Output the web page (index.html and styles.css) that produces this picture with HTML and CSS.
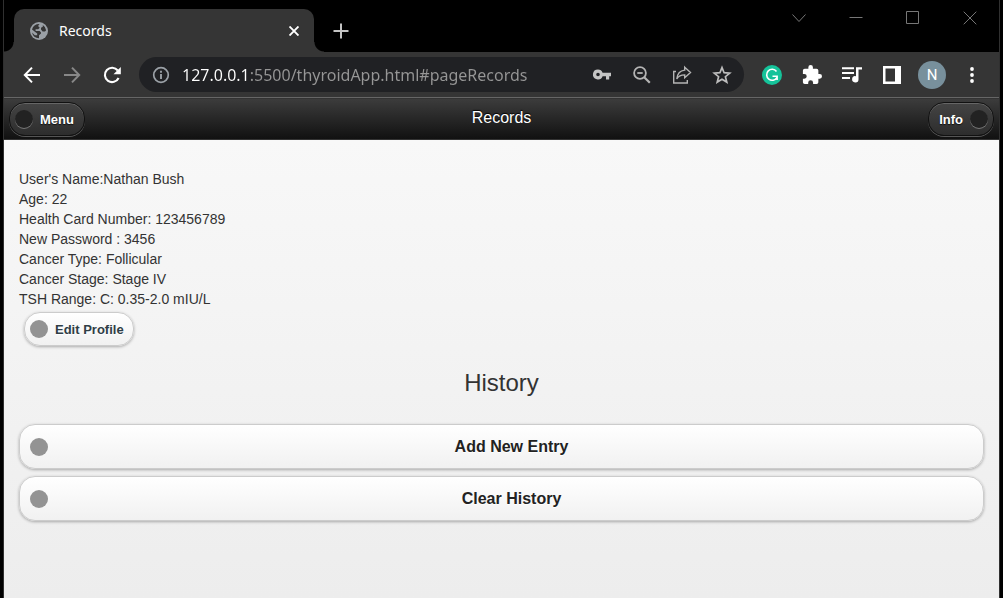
FILE: index.html
```html
<!DOCTYPE html>
<html lang="en">
<head>
<meta charset="utf-8">
<title>Records</title>
<link rel="stylesheet" href="styles.css">
</head>
<body>
<div class="window">
  <div class="tabstrip">
    <div class="tab">
      <svg class="favicon" width="18" height="18" viewBox="0 0 18 18"><circle cx="9" cy="9" r="9" fill="#9aa0a6"/><path d="M9.6 2 8.400 3.200V4.600L9.800 5.800 8.200 7.200H5.600V9H9.600L11 10.400V11.600L9 13.200V16.200A7.200 7.200 0 0 1 2 10.600L4.800 13.200H7.200V11.400L2 7.400A7.200 7.200 0 0 1 9.600 2ZM12.800 3A7.200 7.200 0 0 1 16.100 8.200L15 9.400H12.600L11 7.600V5.800L12.800 4.800Z" fill="#353535"/></svg>
      <span class="tab-title">Records</span>
      <button class="tab-close" aria-label="Close tab"><svg width="10" height="10" viewBox="0 0 10 10" fill="none" stroke="#fff" stroke-width="1.9"><path d="M.5.5l9 9M9.5.5l-9 9"/></svg></button>
    </div>
    <button class="new-tab" aria-label="New tab"><svg width="16" height="16" viewBox="0 0 16 16" stroke="#c4c4c4" stroke-width="2"><path d="M8 .5v15M.5 8h15"/></svg></button>
    <div class="window-controls">
      <button aria-label="Search tabs"><svg width="14" height="14" viewBox="0 0 14 14"><path d="M.5 3.5 7 10.5 13.5 3.5"/></svg></button>
      <button aria-label="Minimize"><svg width="14" height="14" viewBox="0 0 14 14"><path d="M.5 6.500h13"/></svg></button>
      <button aria-label="Maximize"><svg width="14" height="14" viewBox="0 0 14 14"><path d="M.5.5h12v12H.5z"/></svg></button>
      <button aria-label="Close"><svg width="14" height="14" viewBox="0 0 14 14"><path d="M.7.7l12.6 12.6M13.3.7.7 13.3"/></svg></button>
    </div>
  </div>

  <div class="toolbar">
    <button class="tool" aria-label="Back"><svg width="18" height="18" viewBox="0 0 18 18" fill="none" stroke="#fff" stroke-width="2"><path d="M17 9H2M9 1.6 1.8 9 9 16.4"/></svg></button>
    <button class="tool" aria-label="Forward"><svg width="18" height="18" viewBox="0 0 18 18" fill="none" stroke="#888" stroke-width="2"><path d="M1 9h15M9 1.6 16.2 9 9 16.4"/></svg></button>
    <button class="tool" aria-label="Reload"><svg width="18" height="18" viewBox="0 0 18 18"><path d="M15.6 12A7.2 7.2 0 1 1 14.8 4.5" fill="none" stroke="#fff" stroke-width="2.1"/><path d="M17.8.9v7.3h-7.3z" fill="#fff"/></svg></button>
    <div class="omnibox">
      <button class="site-info" aria-label="View site information"><svg width="18" height="18" viewBox="0 0 18 18"><circle cx="9" cy="9" r="7.3" fill="none" stroke="#9aa0a6" stroke-width="1.7"/><path d="M9 8v5M9 4.8v1.9" stroke="#9aa0a6" stroke-width="1.9"/></svg></button>
      <input class="address" type="text" aria-label="Address" value="127.0.0.1:5500/thyroidApp.html#pageRecords">
      <button class="tool" aria-label="Manage passwords"><svg width="20" height="20" viewBox="0 0 20 20"><path fill="#c4c4c4" fill-rule="evenodd" d="M6 4.500a5 5 0 1 0 4.600 6.800H14V14.500h3.200V11.300H19V7.700H10.600A5 5 0 0 0 6 4.500Zm0 3.200a1.800 1.800 0 1 1 0 3.600 1.800 1.800 0 0 1 0-3.600Z"/></svg></button>
      <button class="tool" aria-label="Zoom"><svg width="20" height="20" viewBox="0 0 20 20" fill="none" stroke="#b4b4b4" stroke-width="1.800"><circle cx="8" cy="8" r="5.900"/><path d="M5.300 8h5.400"/><path d="M12.200 12.200 17.800 17.800" stroke-width="2.200"/></svg></button>
      <button class="tool" aria-label="Share"><svg width="20" height="20" viewBox="0 0 20 20" fill="none" stroke="#b4b4b4" stroke-width="1.400"><path d="M4 6.500H1.700V18h13.600v-3"/><path d="M12.700 2.200 18.500 7.600 12.700 12.700V9.900C9 9.900 6.500 11 4.800 14c.4-4.700 3-8.300 7.900-8.900Z"/></svg></button>
      <button class="tool" aria-label="Bookmark this tab"><svg width="20" height="20" viewBox="0 0 20 20" fill="none" stroke="#bdbdbd" stroke-width="1.700"><path d="M10 2.600 12.100 7.700 17.700 8.100 13.400 11.700 14.800 17.100 10 14.200 5.200 17.100 6.600 11.700 2.300 8.100 7.900 7.700Z"/></svg></button>
    </div>
    <div class="extensions">
      <button class="tool" aria-label="Grammar extension"><svg width="20" height="20" viewBox="0 0 20 20"><circle cx="10" cy="10" r="10" fill="#15c39a"/><path d="M14.500 6.400A5.500 5.500 0 1 0 14.900 12.600M10.500 11.300H15.100V15" fill="none" stroke="#fff" stroke-width="1.600"/></svg></button>
      <button class="tool" aria-label="Extensions"><svg width="20" height="20" viewBox="1 1 22 22" fill="#fff"><path d="M20.500 11H19V7a2 2 0 0 0-2-2h-4V3.500a2.500 2.500 0 0 0-5 0V5H4a2 2 0 0 0-2 2v3.800h1.500a2.700 2.700 0 0 1 0 5.400H2V20a2 2 0 0 0 2 2h3.800v-1.500a2.700 2.700 0 0 1 5.400 0V22H17a2 2 0 0 0 2-2v-4h1.500a2.500 2.500 0 0 0 0-5Z"/></svg></button>
      <button class="tool" aria-label="Media controls"><svg width="20" height="20" viewBox="0 0 20 20"><path d="M0 3.300h12M0 8.100h12M0 12.900h8" stroke="#fff" stroke-width="2"/><path d="M14 2.300h6v2.200h-3.500v9.800a3.200 3.200 0 1 1-2.500-3.100Z" fill="#fff"/></svg></button>
      <button class="tool" aria-label="Side panel"><svg width="18" height="18" viewBox="0 0 18 18"><path fill="#fff" fill-rule="evenodd" d="M0 0h18v18H0ZM2.500 2.500v13H12v-13Z"/></svg></button>
      <button class="tool" aria-label="Profile"><span class="avatar">N</span></button>
      <button class="tool" aria-label="Browser menu"><svg width="4" height="16" viewBox="0 0 4 16" fill="#fff"><circle cx="2" cy="2" r="1.900"/><circle cx="2" cy="8" r="1.900"/><circle cx="2" cy="14" r="1.900"/></svg></button>
    </div>
  </div>

  <div class="page">
    <header class="page-header">
      <a class="button header-button" href="#menu"><span class="dot"></span>Menu</a>
      <h1 class="page-title">Records</h1>
      <a class="button header-button info" href="#info">Info<span class="dot"></span></a>
    </header>
    <main class="content">
      <div class="profile">
        <div>User's Name:Nathan Bush</div>
        <div>Age: 22</div>
        <div>Health Card Number: 123456789</div>
        <div>New Password : 3456</div>
        <div>Cancer Type: Follicular</div>
        <div>Cancer Stage: Stage IV</div>
        <div>TSH Range: C: 0.35-2.0 mIU/L</div>
      </div>
      <a class="button edit-button" href="#edit"><span class="dot"></span>Edit Profile</a>
      <h2 class="history-title">History</h2>
      <div class="actions">
        <button class="button action-button"><span class="dot"></span><span class="action-label">Add New Entry</span></button>
        <button class="button action-button"><span class="dot"></span><span class="action-label">Clear History</span></button>
      </div>
    </main>
  </div>
</div>
</body>
</html>
```

FILE: styles.css
```css
* { box-sizing: border-box; }

body {
  margin: 0;
  background: #000;
  font-family: "Liberation Sans", Arial, sans-serif;
}

button {
  margin: 0;
  padding: 0;
  border: 0;
  background: none;
  font: inherit;
  color: inherit;
}

svg { display: block; flex: none; }

.window {
  display: flex;
  flex-direction: column;
  min-height: 100vh;
  margin: 0 3px;
  border: solid #303030;
  border-width: 0 1px;
}

/* Tab strip */
.tabstrip {
  display: flex;
  align-items: flex-end;
  height: 52px;
  padding: 0 1px 0 10px;
  background: #000;
}

.tab {
  position: relative;
  display: flex;
  align-items: center;
  width: 300px;
  height: 43px;
  padding: 0 15px 0 16px;
  border-radius: 10px 10px 0 0;
  background: #353535;
  color: #fff;
  font: 14px/20px "Noto Sans", "Open Sans", sans-serif;
}

/* Flared feet where the tab meets the toolbar */
.tab::before,
.tab::after {
  content: "";
  position: absolute;
  bottom: 0;
  width: 10px;
  height: 10px;
}

.tab::before {
  left: -10px;
  background: radial-gradient(circle at 0 0, #000 9px, #353535 10px);
}

.tab::after {
  right: -10px;
  background: radial-gradient(circle at 100% 0, #000 9px, #353535 10px);
}

.tab-title { flex: 1; margin-left: 11px; }

.new-tab {
  display: grid;
  place-items: center;
  width: 30px;
  height: 43px;
  margin-left: 12px;
}

.window-controls {
  display: flex;
  align-self: flex-start;
  margin-left: auto;
}

.window-controls button {
  display: grid;
  place-items: center;
  width: 57px;
  height: 35px;
}

.window-controls svg {
  fill: none;
  stroke: #777;
  stroke-width: 1;
}

/* Toolbar */
.toolbar {
  display: flex;
  align-items: center;
  height: 46px;
  padding: 0 7px 0 8px;
  border-bottom: 1px solid #666;
  background: #353535;
}

.tool {
  display: grid;
  flex: none;
  place-items: center;
  width: 40px;
  height: 36px;
}

.omnibox {
  display: flex;
  flex: 1;
  align-items: center;
  height: 35px;
  min-width: 0;
  margin: 0 8px 0 7px;
  padding: 0 2px 0 13px;
  border-radius: 18px;
  background: #202124;
}

.address {
  flex: 1;
  min-width: 0;
  margin-left: 12px;
  padding: 0;
  border: 0;
  outline: 0;
  background: linear-gradient(90deg, #fff 66px, #969696 66px);
  background-clip: text;
  -webkit-background-clip: text;
  -webkit-text-fill-color: transparent;
  font: 16px/24px "Noto Sans", "Open Sans", sans-serif;
}

.extensions { display: flex; }

.avatar {
  display: grid;
  place-items: center;
  width: 28px;
  height: 28px;
  border-radius: 50%;
  background: #78909c;
  color: #fff;
  font: 15px/28px Roboto, sans-serif;
}

/* Records page */
.page {
  display: flex;
  flex: 1;
  flex-direction: column;
  background: linear-gradient(#f9f9f9, #ededed);
  color: #333;
}

.page-header {
  display: grid;
  grid-template-columns: 1fr auto 1fr;
  align-items: center;
  height: 42px;
  padding: 0 5px;
  border-top: 1px solid #333;
  border-bottom: 1px solid #333;
  background: linear-gradient(#3c3c3c, #111);
}

.page-title {
  margin: 0;
  padding-bottom: 2px;
  color: #fff;
  font-size: 16px;
  font-weight: 400;
  line-height: 20px;
  text-shadow: 0 -1px 1px #000;
}

.button {
  display: flex;
  align-items: center;
  border: 1px solid #ccc;
  border-radius: 16px;
  background: linear-gradient(#fff, #f1f1f1);
  box-shadow: 0 1px 3px rgba(0, 0, 0, .3);
  color: #222;
  font-weight: 700;
  text-decoration: none;
  text-shadow: 0 1px 0 #fff;
}

.dot {
  flex: none;
  width: 18px;
  height: 18px;
  border-radius: 50%;
  background: #939393;
}

.header-button {
  justify-self: start;
  gap: 7px;
  height: 34px;
  padding: 0 10px 0 5px;
  border-color: #111;
  background: linear-gradient(#444, #2d2d2d);
  box-shadow: inset 0 1px 0 #666, 0 1px 0 #555;
  color: #fff;
  font-size: 13px;
  text-shadow: 0 1px 1px #111;
}

.header-button .dot {
  background: #222;
  box-shadow: 0 1px 0 #777;
}

.info {
  justify-self: end;
  padding: 0 5px 0 10px;
}

.content { padding: 29px 15px 15px; }

.profile { font-size: 14px; line-height: 20px; }

.edit-button {
  width: fit-content;
  gap: 7px;
  height: 34px;
  margin: 3px 0 0 5px;
  padding: 0 9px 0 5px;
  color: #2f3e46;
  font-size: 13px;
}

.history-title {
  margin: 23px 0 27px;
  font-size: 24px;
  font-weight: 400;
  line-height: 28px;
  text-align: center;
}

.actions { display: grid; gap: 7px; }

.action-button {
  height: 45px;
  padding: 0 8px 0 10px;
  font-size: 16px;
  font-weight: 700;
}

.action-label { flex: 1; }
```
